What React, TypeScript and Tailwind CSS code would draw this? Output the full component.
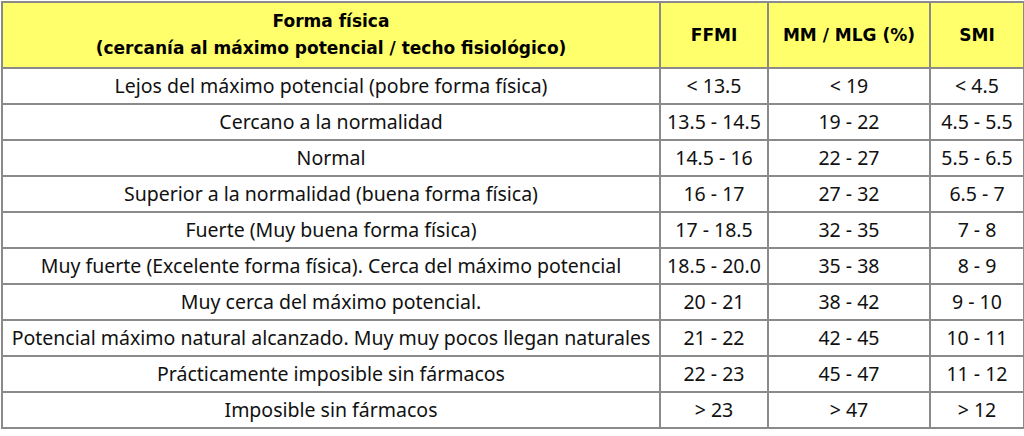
const rows: [string, string, string, string][] = [
  ["Lejos del máximo potencial (pobre forma física)", "< 13.5", "< 19", "< 4.5"],
  ["Cercano a la normalidad", "13.5 - 14.5", "19 - 22", "4.5 - 5.5"],
  ["Normal", "14.5 - 16", "22 - 27", "5.5 - 6.5"],
  ["Superior a la normalidad (buena forma física)", "16 - 17", "27 - 32", "6.5 - 7"],
  ["Fuerte (Muy buena forma física)", "17 - 18.5", "32 - 35", "7 - 8"],
  ["Muy fuerte (Excelente forma física). Cerca del máximo potencial", "18.5 - 20.0", "35 - 38", "8 - 9"],
  ["Muy cerca del máximo potencial.", "20 - 21", "38 - 42", "9 - 10"],
  ["Potencial máximo natural alcanzado. Muy muy pocos llegan naturales", "21 - 22", "42 - 45", "10 - 11"],
  ["Prácticamente imposible sin fármacos", "22 - 23", "45 - 47", "11 - 12"],
  ["Imposible sin fármacos", "> 23", "> 47", "> 12"],
];

const th = "border-2 border-[#8a8a8a] bg-[#ffff6b] p-0 text-center font-bold text-[17px] leading-[27px] text-black";
const td = "border-2 border-[#8a8a8a] h-[36px] p-0 text-center text-[19.5px] leading-[26px] text-[#111]";

export default function App() {
  return (
    <div className="w-[1024px] h-[436px] bg-white pl-px pt-px">
      <table className="table-fixed border-collapse w-[1022px]">
        <colgroup>
          <col className="w-[658px]" />
          <col className="w-[108px]" />
          <col className="w-[162px]" />
          <col className="w-[94px]" />
        </colgroup>
        <thead>
          <tr className="h-[66px] font-['DejaVu_Sans',sans-serif]">
            <th className={th}>
              Forma física
              <br />
              (cercanía al máximo potencial / techo fisiológico)
            </th>
            <th className={th}>FFMI</th>
            <th className={th}>MM / MLG (%)</th>
            <th className={th}>SMI</th>
          </tr>
        </thead>
        <tbody className="font-['Noto_Sans',sans-serif]">
          {rows.map((r) => (
            <tr key={r[0]}>
              {r.map((c, i) => (
                <td key={i} className={td}>
                  {c}
                </td>
              ))}
            </tr>
          ))}
        </tbody>
      </table>
    </div>
  );
}
